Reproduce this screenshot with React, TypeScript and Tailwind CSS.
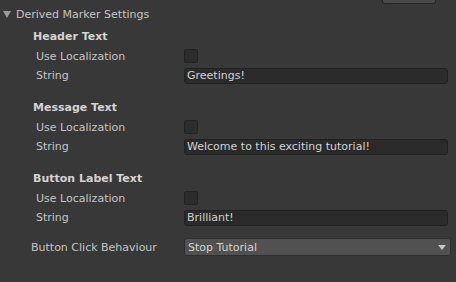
const SECTIONS = [
  { title: 'Header Text', value: 'Greetings!' },
  { title: 'Message Text', value: 'Welcome to this exciting tutorial!' },
  { title: 'Button Label Text', value: 'Brilliant!' },
]

function Checkbox() {
  return <div className="h-[14px] w-[14px] rounded-[2px] border border-[#232323] bg-[#2c2c2c]" />
}

function TextField({ value }: { value: string }) {
  return (
    <div className="flex h-[16px] w-[264px] items-center rounded-[3px] border border-[#212121] bg-[#2a2a2a] pl-[2px] text-[#d2d2d2]">
      {value}
    </div>
  )
}

export default function App() {
  return (
    <div
      className="h-[282px] w-[456px] overflow-hidden bg-[#383838] text-[11px] leading-none text-[#c4c4c4]"
      style={{ fontFamily: '"DejaVu Sans", Verdana, sans-serif' }}
    >
      <div className="flex h-[4px] justify-end pr-[20px]">
        <div className="-mt-[10px] h-[14px] w-[54px] rounded-[3px] border border-[#262626] bg-[#484848]" />
      </div>

      <div className="flex h-[20px] items-center pl-[3px]">
        <svg width="8" height="7" viewBox="0 0 8 7" className="mr-[5px]">
          <path d="M0 0h8L4 7z" fill="#9a9a9a" />
        </svg>
        <span>Derived Marker Settings</span>
      </div>

      <div className="mt-[2px]">
        {SECTIONS.map((s) => (
          <div key={s.title} className="mb-[12px]">
            <div className="flex h-[20px] items-center pl-[33px] font-bold text-[#d4d4d4]">{s.title}</div>
            <div className="flex h-[20px] items-center">
              <span className="w-[184px] pl-[36px]">Use Localization</span>
              <Checkbox />
            </div>
            <div className="flex h-[19px] items-center">
              <span className="w-[184px] pl-[36px]">String</span>
              <TextField value={s.value} />
            </div>
          </div>
        ))}
      </div>

      <div className="-mt-[1px] flex h-[18px] items-center">
        <span className="w-[184px] pl-[31px]">Button Click Behaviour</span>
        <div className="flex h-[18px] w-[267px] items-center justify-between rounded-[3px] border border-[#2e2e2e] bg-[#515151] pl-[3px] pr-[4px] text-[#d4d4d4]">
          <span>Stop Tutorial</span>
          <svg width="8" height="5" viewBox="0 0 8 5">
            <path d="M0 0h8L4 5z" fill="#c8c8c8" />
          </svg>
        </div>
      </div>
    </div>
  )
}
